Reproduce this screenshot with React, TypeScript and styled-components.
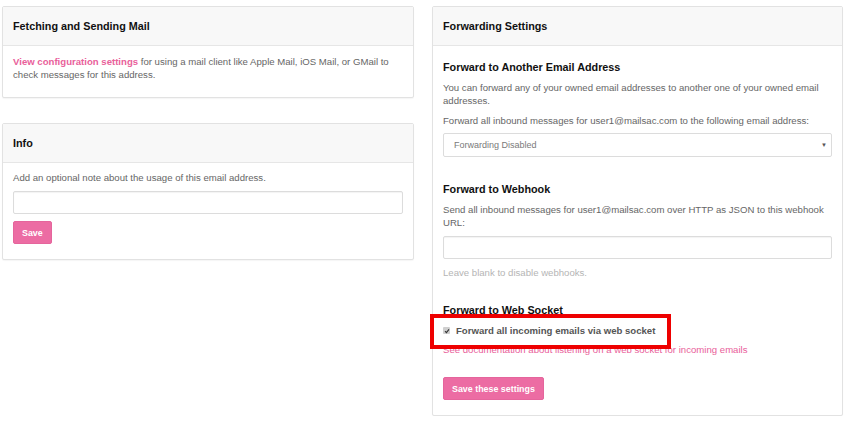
import React from "react";
import styled, { createGlobalStyle } from "styled-components";

const Global = createGlobalStyle`
  * { box-sizing: border-box; }
  html, body { margin: 0; padding: 0; background: #fff; }
  body {
    font-family: "Liberation Sans", Arial, Helvetica, sans-serif;
    font-size: 9.6px;
    line-height: 13px;
    color: #666;
  }
`;

const Page = styled.div`
  display: grid;
  grid-template-columns: 412px 411px;
  column-gap: 18px;
  align-items: start;
  padding: 6px 0 0 2px;
`;

const Column = styled.div<{ $gap?: number }>`
  display: flex;
  flex-direction: column;
  gap: ${(p) => p.$gap ?? 25}px;
`;

const Panel = styled.section`
  position: relative;
  background: #fff;
  border: 1px solid #e2e2e2;
  border-radius: 2px;
  box-shadow: 0 1px 1px rgba(0, 0, 0, 0.04);
`;

const PanelHeading = styled.div`
  height: 39px;
  display: flex;
  align-items: center;
  padding: 0 10px;
  background: #f8f8f8;
  border-bottom: 1px solid #e6e6e6;
`;

const PanelTitle = styled.h3`
  margin: 0;
  font-size: 10.8px;
  font-weight: bold;
  color: #111;
`;

const PanelBody = styled.div<{ $pt?: number; $pb?: number }>`
  padding: ${(p) => p.$pt ?? 9}px 10px ${(p) => p.$pb ?? 9}px;
`;

const Text = styled.p<{ $mb?: number }>`
  margin: 0 0 ${(p) => p.$mb ?? 7}px;
`;

const Link = styled.a<{ $bold?: boolean }>`
  color: #e9609a;
  font-weight: ${(p) => (p.$bold ? "bold" : "normal")};
  text-decoration: none;
`;

const Muted = styled.p`
  margin: 0;
  color: #b5b5b5;
`;

const SectionTitle = styled.h4<{ $mt: number }>`
  margin: ${(p) => p.$mt}px 0 7px;
  font-size: 10.8px;
  line-height: 13px;
  font-weight: bold;
  color: #111;
`;

const TextInput = styled.input`
  display: block;
  width: 100%;
  height: 23px;
  margin: 0 0 7px;
  border: 1px solid #dcdcdc;
  border-radius: 2px;
  background: #fff;
  box-shadow: inset 0 1px 1px rgba(0, 0, 0, 0.05);
  font: inherit;
  padding: 0 8px;
`;

const SelectBox = styled.div`
  display: flex;
  align-items: center;
  justify-content: space-between;
  height: 24px;
  margin-top: -1px;
  padding: 0 4px 0 10px;
  border: 1px solid #dcdcdc;
  border-radius: 2px;
  background: #fff;
  color: #7a7a7a;
  font-size: 9px;
`;

const Caret = styled.span`
  font-size: 6px;
  color: #555;
`;

const Button = styled.button`
  height: 23px;
  padding: 0 8px;
  border: 1px solid #e5659c;
  border-radius: 2px;
  background: #ec6ca3;
  color: #fff;
  font-family: inherit;
  font-size: 8.9px;
  font-weight: bold;
  cursor: pointer;
`;

const CheckRow = styled.label`
  display: flex;
  align-items: center;
  gap: 6px;
  height: 13px;
  margin: 7px 0 6px;
  font-weight: bold;
  color: #555;
`;

const CheckBox = styled.span`
  width: 7px;
  height: 7px;
  border-radius: 1px;
  background: #cfcfcf;
  display: flex;
  align-items: center;
  justify-content: center;
`;

const Highlight = styled.div`
  position: absolute;
  left: -3px;
  top: 307px;
  width: 241px;
  height: 35px;
  border: 4px solid #ee0000;
  pointer-events: none;
`;

const ButtonWrap = styled.div`
  margin-top: 21px;
  padding-bottom: 6px;
`;

export default function App() {
  return (
    <>
      <Global />
      <Page>
        <Column>
          <Panel>
            <PanelHeading>
              <PanelTitle>Fetching and Sending Mail</PanelTitle>
            </PanelHeading>
            <PanelBody>
              <Text>
                <Link $bold href="#">View configuration settings</Link> for using a mail client like
                Apple Mail, iOS Mail, or GMail to check messages for this address.
              </Text>
            </PanelBody>
          </Panel>
          <Panel>
            <PanelHeading>
              <PanelTitle>Info</PanelTitle>
            </PanelHeading>
            <PanelBody $pt={8} $pb={15}>
              <Text>Add an optional note about the usage of this email address.</Text>
              <TextInput type="text" />
              <Button>Save</Button>
            </PanelBody>
          </Panel>
        </Column>
        <Column>
          <Panel>
            <PanelHeading>
              <PanelTitle>Forwarding Settings</PanelTitle>
            </PanelHeading>
            <PanelBody>
              <SectionTitle $mt={6}>Forward to Another Email Address</SectionTitle>
              <Text>
                You can forward any of your owned email addresses to another one of your owned
                email addresses.
              </Text>
              <Text>
                Forward all inbound messages for user1@mailsac.com to the following email address:
              </Text>
              <SelectBox>
                <span>Forwarding Disabled</span>
                <Caret>▼</Caret>
              </SelectBox>
              <SectionTitle $mt={26}>Forward to Webhook</SectionTitle>
              <Text>
                Send all inbound messages for user1@mailsac.com over HTTP as JSON to this webhook
                URL:
              </Text>
              <TextInput type="text" />
              <Muted>Leave blank to disable webhooks.</Muted>
              <SectionTitle $mt={25}>Forward to Web Socket</SectionTitle>
              <CheckRow>
                <CheckBox>
                  <svg width="6" height="6" viewBox="0 0 6 6">
                    <path d="M1 3.2 L2.4 4.6 L5 1.4" fill="none" stroke="#333" strokeWidth="1.1" />
                  </svg>
                </CheckBox>
                Forward all incoming emails via web socket
              </CheckRow>
              <Link href="#">See documentation about listening on a web socket for incoming emails</Link>
              <ButtonWrap>
                <Button>Save these settings</Button>
              </ButtonWrap>
            </PanelBody>
            <Highlight />
          </Panel>
        </Column>
      </Page>
    </>
  );
}
